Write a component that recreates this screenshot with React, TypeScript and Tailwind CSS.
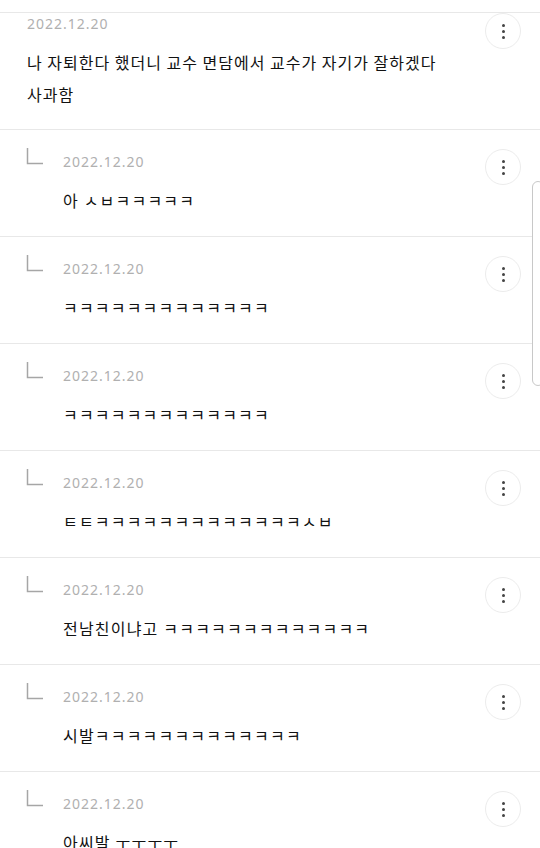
import { Fragment } from 'react';

const DATE = '2022.12.20';

const ROOT = {
  text: '나 자퇴한다 했더니 교수 면담에서 교수가 자기가 잘하겠다 사과함',
};

const REPLIES = [
  '아 ㅅㅂㅋㅋㅋㅋㅋ',
  'ㅋㅋㅋㅋㅋㅋㅋㅋㅋㅋㅋㅋㅋ',
  'ㅋㅋㅋㅋㅋㅋㅋㅋㅋㅋㅋㅋㅋ',
  'ㅌㅌㅋㅋㅋㅋㅋㅋㅋㅋㅋㅋㅋㅋㅋㅅㅂ',
  '전남친이냐고 ㅋㅋㅋㅋㅋㅋㅋㅋㅋㅋㅋㅋㅋ',
  '시발ㅋㅋㅋㅋㅋㅋㅋㅋㅋㅋㅋㅋㅋ',
  '아씨발 ㅜㅜㅜㅜ',
];

function MoreButton({ className = '' }: { className?: string }) {
  return (
    <button
      type="button"
      className={`w-[36px] h-[36px] shrink-0 rounded-full border border-[#ececec] bg-white flex flex-col items-center justify-center gap-[3px] ${className}`}
    >
      <span className="w-[3px] h-[3px] rounded-full bg-[#444]" />
      <span className="w-[3px] h-[3px] rounded-full bg-[#444]" />
      <span className="w-[3px] h-[3px] rounded-full bg-[#444]" />
    </button>
  );
}

function CommentDate() {
  return (
    <div className="h-5 leading-5 text-[14px] tracking-[1px] text-[#b0b0b0] font-['Noto_Sans',sans-serif]">
      {DATE}
    </div>
  );
}

export default function App() {
  return (
    <div className="relative w-[540px] h-[848px] overflow-hidden bg-white font-['Noto_Sans_CJK_KR','Noto_Sans',sans-serif]">
      <div className="pt-[12px]">
        {/* original comment */}
        <div className="flex items-start border-t border-[#e8e8e8] pl-[27px] pr-[19px] pb-[19px]">
          <div className="flex-1 pt-[1px]">
            <CommentDate />
            <p className="mt-[12px] text-[16px] leading-[32px] tracking-[1px] text-[#111] max-w-[445px] break-keep">{ROOT.text}</p>
          </div>
          <MoreButton />
        </div>

        {/* replies */}
        {REPLIES.map((text, i) => (
          <Fragment key={i}>
            <div className="flex items-start border-t border-[#e8e8e8] pl-[26px] pr-[19px] h-[107px]">
              <svg width="17" height="17" viewBox="0 0 17 17" className="mt-[18px] shrink-0">
                <path d="M1.5 0 V15.5 H17" fill="none" stroke="#a6a6a6" strokeWidth="1.5" />
              </svg>
              <div className="flex-1 ml-[20px] pt-[22px]">
                <CommentDate />
                <p className="mt-[12px] text-[16px] leading-[32px] tracking-[1.2px] text-[#111] whitespace-nowrap">{text}</p>
              </div>
              <MoreButton className="mt-[19px]" />
            </div>
          </Fragment>
        ))}
      </div>

      {/* scroll indicator overlay */}
      <div className="absolute right-[-4px] top-[181px] w-[12px] h-[205px] rounded-[7px] border border-[#c8c8c8] bg-white" />
    </div>
  );
}
